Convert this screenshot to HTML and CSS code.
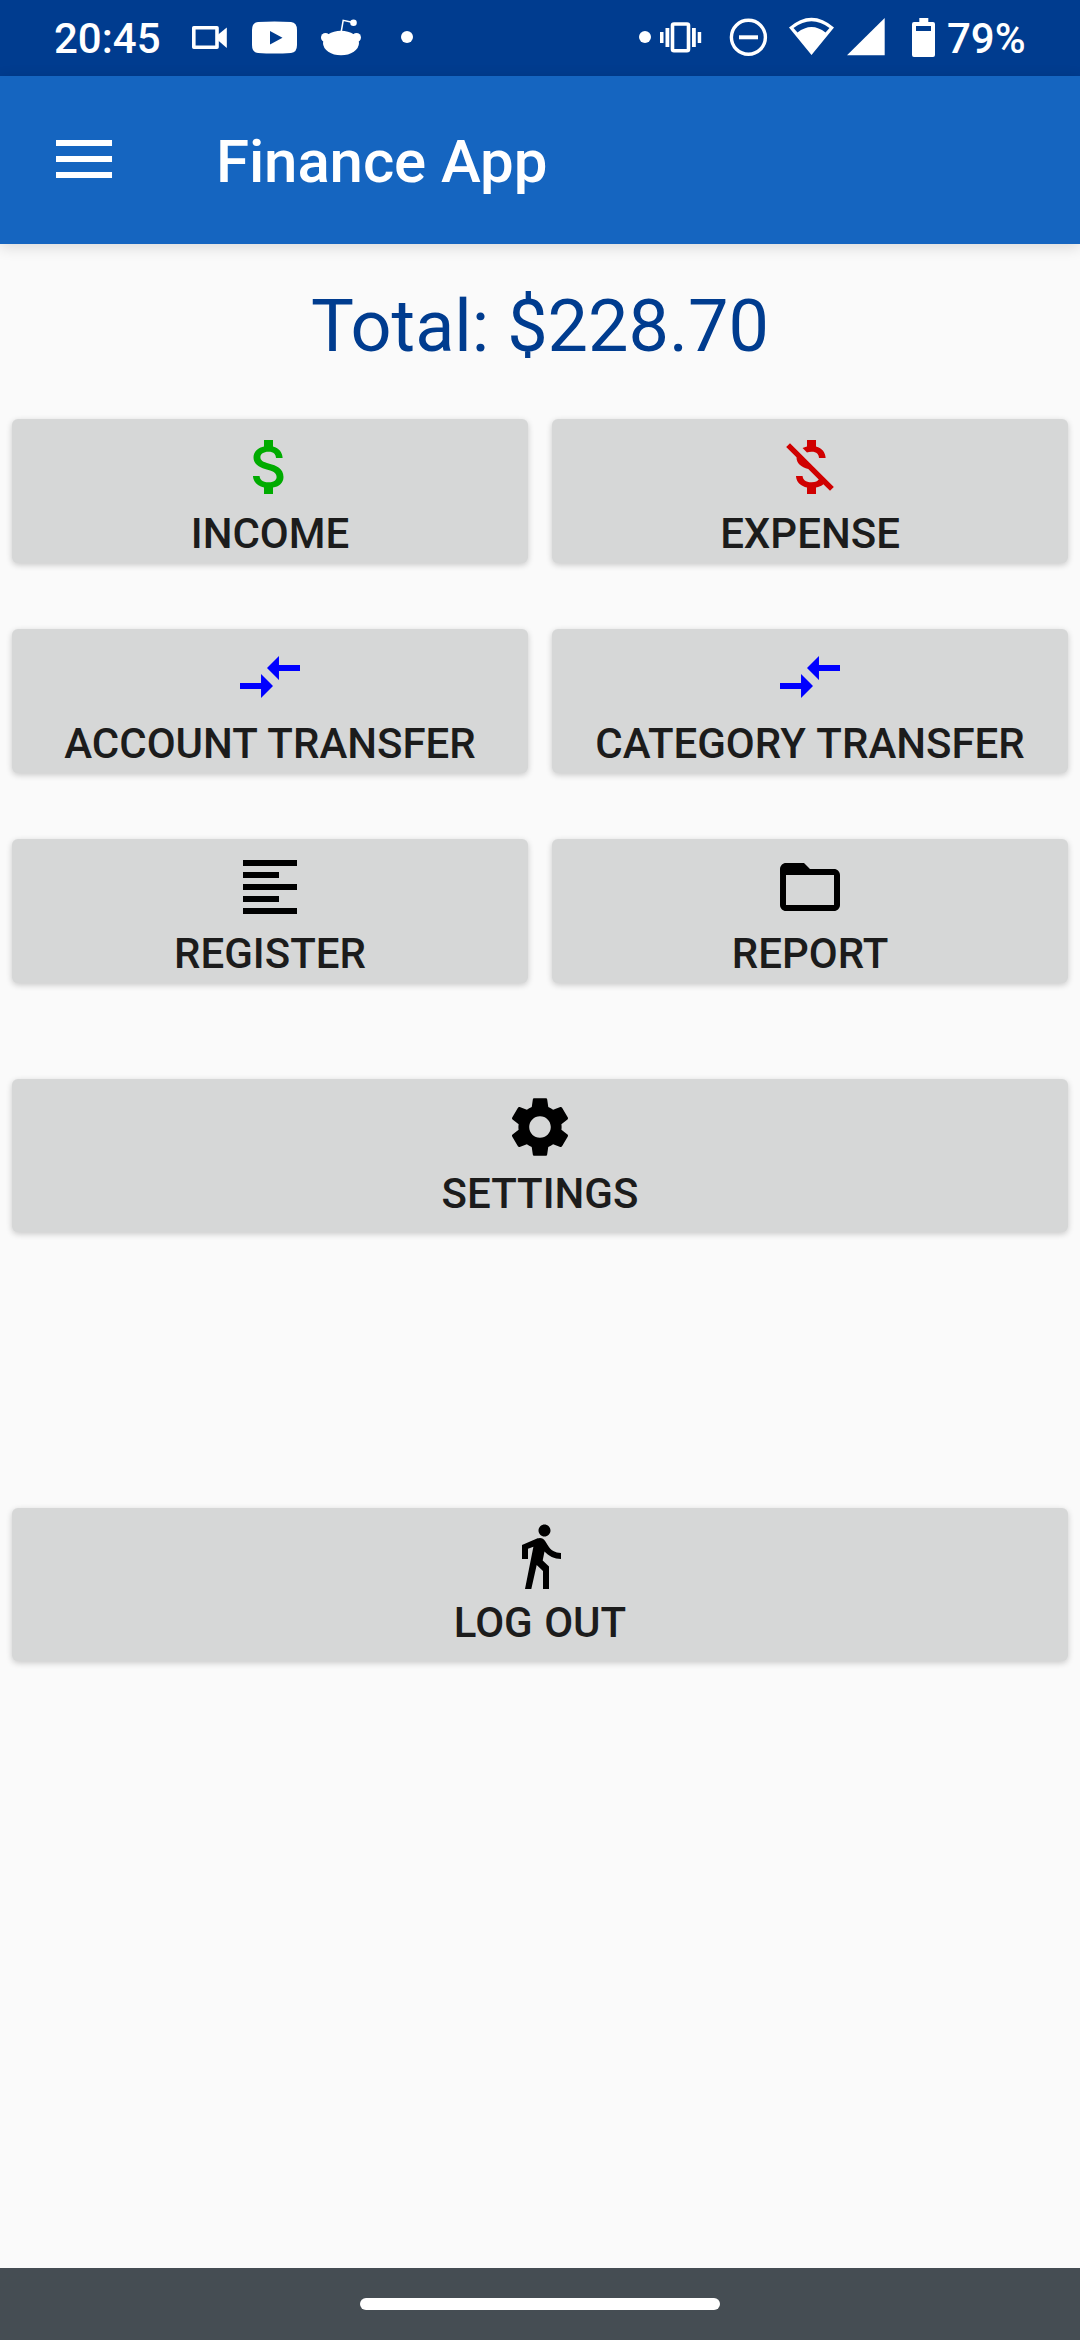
FILE: index.html
```html
<!DOCTYPE html>
<html lang="en">
<head>
<meta charset="utf-8">
<title>Finance App</title>
<link rel="stylesheet" href="styles.css">
</head>
<body>
<div class="screen">
  <div class="status-bar">
    <div class="status-group">
      <span class="clock">20:45</span>
      <svg class="camera" width="36" height="76" viewBox="192 0 36 76"><path fill="none" stroke="#fff" stroke-width="3.6" stroke-linejoin="round" d="M193.8 27.8H217V47.200H193.800Z"/><path fill="#fff" d="M217 35.500L226.800 27.500V48L217 39.500Z"/></svg>
      <svg class="youtube" width="46" height="76" viewBox="252 0 46 76"><path fill="#fff" fill-rule="evenodd" d="M258 22Q274.500 21 291 22Q297 22.500 297 30V45Q297 52.500 291 53Q274.500 54 258 53Q252 52.500 252 45V30Q252 22.500 258 22ZM270 31V44.500L282.500 37.700Z"/></svg>
      <svg class="reddit" width="42" height="76" viewBox="320 0 42 76"><g fill="#fff"><ellipse cx="341" cy="43" rx="18" ry="12.200"/><circle cx="325.500" cy="37.500" r="4.500"/><circle cx="356.500" cy="37.500" r="4.500"/><circle cx="353.500" cy="22.700" r="3.300"/></g><path fill="none" stroke="#fff" stroke-width="1.500" d="M341 33L343.200 20.300L353 22.500"/></svg>
      <svg class="dot-left" width="12" height="76" viewBox="401 0 12 76"><circle cx="407" cy="37" r="6" fill="#fff"/></svg>
    </div>
    <div class="status-group">
      <svg class="dot-right" width="12" height="76" viewBox="639 0 12 76"><circle cx="645" cy="37" r="6" fill="#fff"/></svg>
      <svg class="vibrate" width="42" height="76" viewBox="660 0 42 76"><rect x="672.500" y="24" width="16" height="26.800" rx="1.500" fill="none" stroke="#fff" stroke-width="3.600"/><path fill="#fff" d="M660 32h3.500v11H660zM665.500 28h3.800v19h-3.800zM692 28h3.800v19H692zM697.700 32h3.500v11h-3.500z"/></svg>
      <svg class="dnd" width="40" height="76" viewBox="728 0 40 76"><circle cx="748.400" cy="37.300" r="17" fill="none" stroke="#fff" stroke-width="3.400"/><path fill="#fff" d="M739 35.300h19v4h-19z"/></svg>
      <svg class="wifi" width="46" height="76" viewBox="788 0 46 76"><path fill="#fff" fill-rule="evenodd" d="M789 27.500Q811.500 8 834 27.500L811.500 55ZM793.500 28L797.500 32.500Q811.500 21.500 825.500 32.500L829.500 28Q811.500 14.500 793.500 28Z"/></svg>
      <svg class="signal" width="38" height="76" viewBox="847 0 38 76"><path fill="#fff" d="M847 55.300L884.700 18V55.300Z"/></svg>
      <svg class="battery" width="24" height="76" viewBox="912 0 24 76"><path fill="#fff" fill-rule="evenodd" d="M919.300 18H928.300V22H933Q935 22 935 24V55Q935 57 933 57H914Q912 57 912 55V24Q912 22 914 22H919.300ZM916 26V31H931V26Z"/></svg>
      <span class="percent">79%</span>
    </div>
  </div>

  <header class="app-bar">
    <svg class="menu" width="72" height="72" viewBox="0 0 24 24"><path fill="#fff" d="M2.670 5.670h18.670v2H2.670zM2.670 11h18.670v2H2.670zM2.670 16.330h18.670v2H2.670z"/></svg>
    <h1 class="app-title">Finance App</h1>
  </header>

  <main class="content">
    <p class="total">Total: $228.70</p>
    <div class="actions">
      <button class="tile income"><svg class="icon" viewBox="0 0 24 24"><path d="M11.800 10.900c-2.270-.59-3-1.200-3-2.150 0-1.090 1.010-1.850 2.700-1.850 1.780 0 2.440.85 2.500 2.100h2.210c-.07-1.720-1.120-3.300-3.210-3.810V3h-3v2.160c-1.940.42-3.500 1.680-3.500 3.610 0 2.310 1.910 3.460 4.700 4.130 2.500.6 3 1.480 3 2.410 0 .69-.49 1.790-2.700 1.790-2.060 0-2.870-.92-2.980-2.100h-2.200c.12 2.190 1.760 3.420 3.680 3.830V21h3v-2.150c1.950-.37 3.500-1.500 3.500-3.550 0-2.840-2.430-3.810-4.700-4.400z"/></svg><span>INCOME</span></button>
      <button class="tile expense"><svg class="icon" viewBox="0 0 24 24"><path d="M12.500 6.900c1.780 0 2.440.85 2.500 2.100h2.210c-.07-1.720-1.120-3.300-3.210-3.810V3h-3v2.160c-.53.12-1.030.3-1.480.54l1.470 1.470c.41-.17.91-.27 1.510-.27zM5.330 4.060L4.060 5.330 7.500 8.770c0 2.080 1.560 3.210 3.910 3.910l3.510 3.510c-.34.48-1.050.91-2.420.91-2.060 0-2.870-.92-2.980-2.100h-2.200c.12 2.190 1.760 3.420 3.680 3.830V21h3v-2.150c.96-.18 1.820-.55 2.450-1.120l2.220 2.220 1.270-1.270L5.330 4.060z"/></svg><span>EXPENSE</span></button>
      <button class="tile transfer"><svg class="icon" viewBox="0 0 24 24"><path d="M9.010 14H2v2h7.010v3L13 15l-3.990-4v3zm5.980-1v-3H22V8h-7.010V5L11 9l3.990 4z"/></svg><span>ACCOUNT TRANSFER</span></button>
      <button class="tile transfer"><svg class="icon" viewBox="0 0 24 24"><path d="M9.010 14H2v2h7.010v3L13 15l-3.990-4v3zm5.980-1v-3H22V8h-7.010V5L11 9l3.990 4z"/></svg><span>CATEGORY TRANSFER</span></button>
      <button class="tile"><svg class="icon" viewBox="0 0 24 24"><path d="M15 15H3v2h12v-2zm0-8H3v2h12V7zM3 13h18v-2H3v2zm0 8h18v-2H3v2zM3 3v2h18V3H3z"/></svg><span>REGISTER</span></button>
      <button class="tile"><svg class="icon" viewBox="0 0 24 24"><path d="M20 6h-8l-2-2H4c-1.100 0-1.990.9-1.990 2L2 18c0 1.100.9 2 2 2h16c1.100 0 2-.9 2-2V8c0-1.100-.9-2-2-2zm0 12H4V8h16v10z"/></svg><span>REPORT</span></button>
    </div>
    <button class="tile wide settings"><svg class="icon" viewBox="0 0 24 24"><path d="M19.140 12.940c.04-.3.06-.61.06-.94 0-.32-.02-.64-.07-.94l2.030-1.580c.18-.14.23-.41.12-.61l-1.920-3.320c-.12-.22-.37-.29-.59-.22l-2.390.96c-.5-.38-1.030-.7-1.620-.94l-.36-2.540c-.04-.24-.24-.41-.48-.41h-3.840c-.24 0-.43.17-.47.41l-.36 2.540c-.59.24-1.130.57-1.620.94l-2.390-.96c-.22-.08-.47 0-.59.22L2.740 8.870c-.12.21-.08.47.12.61l2.030 1.580c-.05.3-.09.63-.09.94s.02.64.07.94l-2.030 1.580c-.18.14-.23.41-.12.61l1.920 3.320c.12.22.37.29.59.22l2.390-.96c.5.38 1.030.7 1.620.94l.36 2.540c.05.24.24.41.48.41h3.840c.24 0 .44-.17.47-.41l.36-2.540c.59-.24 1.130-.56 1.620-.94l2.390.96c.22.08.47 0 .59-.22l1.920-3.320c.12-.22.07-.47-.12-.61l-2.010-1.580zM12 15.600c-1.980 0-3.600-1.620-3.600-3.600s1.620-3.600 3.600-3.600 3.600 1.620 3.600 3.600-1.620 3.600-3.600 3.600z"/></svg><span>SETTINGS</span></button>
    <button class="tile wide logout"><svg class="icon" viewBox="0 0 24 24"><path d="M13.500 5.500c1.100 0 2-.9 2-2s-.9-2-2-2-2 .9-2 2 .9 2 2 2zM9.800 8.900L7 23h2.100l1.800-8 2.100 2v6h2v-7.500l-2.100-2 .6-3C14.800 12 16.800 13 19 13v-2c-1.900 0-3.500-1-4.300-2.400l-1-1.600c-.4-.6-1-1-1.700-1-.3 0-.5.1-.8.1L6 8.300V13h2V9.600l1.800-.7"/></svg><span>LOG OUT</span></button>
  </main>

  <div class="nav-bar"><div class="nav-handle"></div></div>
</div>
</body>
</html>
```
FILE: styles.css
```css
* { box-sizing: border-box; }

body {
  margin: 0;
  background: #fafafa;
  font-family: Roboto, "Liberation Sans", sans-serif;
}

.screen {
  display: flex;
  flex-direction: column;
  width: 1080px;
  height: 2340px;
  background: #fafafa;
  overflow: hidden;
}

svg { display: block; flex: none; }

/* System status bar */
.status-bar {
  display: flex;
  justify-content: space-between;
  flex: none;
  height: 76px;
  padding: 0 54px;
  background: #003c8f;
  color: #fff;
  font-size: 42px;
  font-weight: 500;
  line-height: 78px;
}

.status-group { display: flex; }
.clock { width: 138px; }
.youtube { margin-left: 24px; }
.reddit { margin-left: 22px; }
.dot-left { margin-left: 39px; }
.vibrate { margin-left: 9px; }
.dnd { margin-left: 26px; }
.wifi { margin-left: 20px; }
.signal { margin-left: 13px; }
.battery { margin-left: 27px; }
.percent { width: 79px; margin-left: 11px; white-space: nowrap; }

/* Toolbar */
.app-bar {
  display: flex;
  align-items: center;
  flex: none;
  height: 168px;
  padding-left: 48px;
  background: #1565c0;
  color: #fff;
  box-shadow: 0 3px 14px rgba(0, 0, 0, 0.14);
}

.menu { margin-top: -2px; }

.app-title {
  margin: 4px 0 0 96px;
  font-size: 60px;
  font-weight: 500;
  letter-spacing: -0.12px;
  line-height: 72px;
}

/* Page body */
.content {
  display: flex;
  flex-direction: column;
  flex: 1;
  padding: 41px 12px 0;
}

.total {
  margin: 0 0 50px;
  color: #003c8f;
  font-size: 72px;
  line-height: 84px;
  text-align: center;
}

.actions {
  display: grid;
  grid-template-columns: 1fr 1fr;
  gap: 66px 24px;
}

.tile {
  display: flex;
  flex-direction: column;
  align-items: center;
  height: 144px;
  padding: 12px 0 0;
  border: 0;
  border-radius: 6px;
  background: #d6d7d7;
  box-shadow: 0 2px 6px rgba(0, 0, 0, 0.2);
  color: #1c1c1c;
  font-family: inherit;
  font-size: 42px;
  font-weight: 500;
  line-height: 49px;
  word-spacing: 1px;
  white-space: nowrap;
}

.icon {
  width: 72px;
  height: 72px;
  margin-bottom: 6px;
  fill: #000;
}

.income .icon { fill: #00ab00; }
.expense .icon { fill: #d00000; }
.transfer .icon { fill: #0000ff; }

.wide { flex: none; height: 153px; }
.settings { margin-top: 96px; }
.logout { margin-top: 276px; }

/* Gesture navigation */
.nav-bar {
  display: flex;
  align-items: center;
  justify-content: center;
  flex: none;
  height: 72px;
  background: #454d53;
}

.nav-handle {
  width: 360px;
  height: 12px;
  border-radius: 6px;
  background: #fff;
}
```
